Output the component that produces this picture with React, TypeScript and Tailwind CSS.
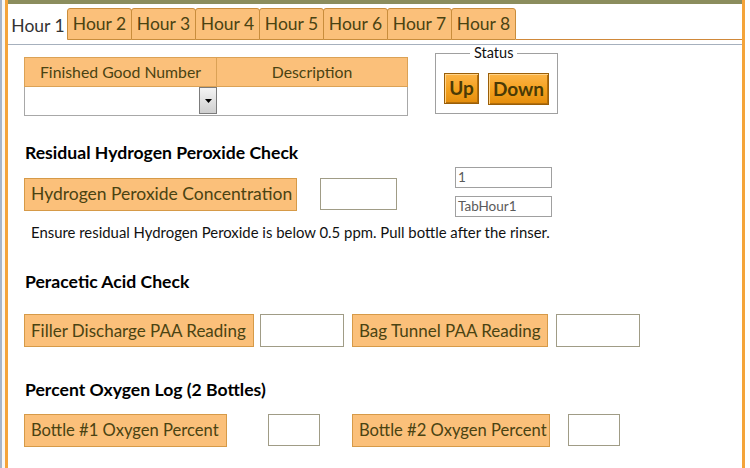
const tabs = ['Hour 1', 'Hour 2', 'Hour 3', 'Hour 4', 'Hour 5', 'Hour 6', 'Hour 7', 'Hour 8']

function Label({ text, w, size }: { text: string; w: string; size: string }) {
  return (
    <div
      className={`${w} ${size} flex h-[33px] shrink-0 items-center overflow-hidden whitespace-nowrap border border-[#d69a48] bg-[#fbc07a] pl-[6px] text-[#4a4312]`}
    >
      {text}
    </div>
  )
}

function Box({ w, h = 'h-[33px]' }: { w: string; h?: string }) {
  return <div className={`${w} ${h} shrink-0 border border-[#a09c86] bg-white`} />
}

export default function App() {
  return (
    <div className="flex h-[468px] w-[750px] overflow-hidden bg-white font-[Lato,sans-serif]">
      {/* left frame */}
      <div className="w-[2px] shrink-0 bg-[#a7b5c9]" />
      <div className="w-[3px] shrink-0 bg-[#f7f7f5]" />
      <div className="w-[3px] shrink-0 bg-[#f4a43a]" />

      <div className="flex w-[734px] shrink-0 flex-col">
        <div className="h-[4px] bg-[#8b8d5d]" />

        {/* tabs */}
        <div className="mt-[4px] flex h-[36px] items-start">
          {tabs.map((t, i) =>
            i === 0 ? (
              <div
                key={t}
                className="flex h-[36px] w-[60px] shrink-0 items-start justify-center bg-white pt-[5px] text-[17.5px] text-[#333]"
              >
                {t}
              </div>
            ) : (
              <div
                key={t}
                className="-ml-px flex h-[32px] w-[65px] shrink-0 items-center justify-center rounded-t-[3px] border border-[#c98d3c] bg-[#fbc07a] text-[17.5px] text-[#4a4312] first:ml-0"
              >
                {t}
              </div>
            )
          )}
          <div className="h-[32px] flex-1 border-b border-[#d0893a]" />
        </div>
        <div className="h-px bg-[#a6b0bd]" />

        {/* content */}
        <div className="flex flex-col pl-[16px]">
          <div className="flex items-start">
            <div className="mt-[12px] w-[384px] shrink-0">
              <div className="flex h-[30px] border border-[#dba256] bg-[#fbc07a] text-[15.8px] text-[#4a4312]">
                <div className="flex w-[192px] items-center justify-center border-r border-[#dba256]">
                  Finished Good Number
                </div>
                <div className="flex flex-1 items-center justify-center">Description</div>
              </div>
              <div className="flex h-[29px] border border-t-0 border-[#a8a8a8] bg-white">
                <div className="flex w-[192px] justify-end">
                  <div className="flex h-[27px] w-[18px] items-center justify-center border border-[#7c7c7c] bg-gradient-to-b from-[#f4f4f4] to-[#cfcfcf]">
                    <svg width="7" height="4" viewBox="0 0 7 4">
                      <path d="M0 0h7L3.5 4z" fill="#000" />
                    </svg>
                  </div>
                </div>
              </div>
            </div>

            <fieldset className="ml-[27px] mt-[1px] h-[68px] w-[121px] shrink-0 border border-[#a0a0a0] px-[8px]">
              <legend className="ml-[26px] px-[4px] text-[14.5px] leading-[14px] text-[#111]">Status</legend>
              <div className="mt-[13px] flex items-start gap-[9px]">
                <button className="flex h-[31px] w-[35px] items-center justify-center border border-[#9a5e08] bg-gradient-to-b from-[#fcb445] via-[#f5a21e] to-[#e48d0b] text-[19px] font-bold text-[#4a3a06] shadow-[inset_1px_1px_0_#ffd48a,inset_-1px_-1px_0_#b56f0a]">
                  Up
                </button>
                <button className="flex h-[32px] w-[61px] items-center justify-center border border-[#9a5e08] bg-gradient-to-b from-[#fcb445] via-[#f5a21e] to-[#e48d0b] text-[19px] font-bold text-[#4a3a06] shadow-[inset_1px_1px_0_#ffd48a,inset_-1px_-1px_0_#b56f0a]">
                  Down
                </button>
              </div>
            </fieldset>
          </div>

          {/* residual hydrogen peroxide */}
          <div className="ml-px mt-[27px] h-[20px] whitespace-nowrap text-[17.6px] font-bold leading-[20px] text-black">
            Residual Hydrogen Peroxide Check
          </div>
          <div className="flex items-start">
            <div className="mt-[15px]">
              <Label text="Hydrogen Peroxide Concentration" w="w-[273px]" size="text-[17.5px]" />
            </div>
            <div className="ml-[23px] mt-[15px]">
              <Box w="w-[77px]" h="h-[32px]" />
            </div>
            <div className="ml-[58px] mt-[4px] flex flex-col gap-[8px]">
              <div className="flex h-[21px] w-[97px] items-center border border-[#a0a0a0] pl-[2px] text-[13.5px] text-[#5a5a5a]">
                1
              </div>
              <div className="flex h-[21px] w-[97px] items-center border border-[#a0a0a0] pl-[2px] text-[13.5px] text-[#5a5a5a]">
                TabHour1
              </div>
            </div>
          </div>
          <div className="ml-[7px] mt-[5px] whitespace-nowrap text-[14.9px] leading-[20px] text-[#111]">
            Ensure residual Hydrogen Peroxide is below 0.5 ppm. Pull bottle after the rinser.
          </div>

          {/* peracetic acid */}
          <div className="ml-px mt-[30px] h-[20px] whitespace-nowrap text-[17.6px] font-bold leading-[20px] text-black">
            Peracetic Acid Check
          </div>
          <div className="mt-[22px] flex items-start">
            <Label text="Filler Discharge PAA Reading" w="w-[230px]" size="text-[17px]" />
            <div className="ml-[6px]">
              <Box w="w-[84px]" />
            </div>
            <div className="ml-[8px]">
              <Label text="Bag Tunnel PAA Reading" w="w-[196px]" size="text-[17px]" />
            </div>
            <div className="ml-[8px]">
              <Box w="w-[84px]" />
            </div>
          </div>

          {/* oxygen */}
          <div className="ml-px mt-[33px] h-[20px] whitespace-nowrap text-[17.6px] font-bold leading-[20px] text-black">
            Percent Oxygen Log (2 Bottles)
          </div>
          <div className="mt-[14px] flex items-start">
            <Label text="Bottle #1 Oxygen Percent" w="w-[203px]" size="text-[16.6px]" />
            <div className="ml-[41px]">
              <Box w="w-[52px]" h="h-[32px]" />
            </div>
            <div className="ml-[32px]">
              <Label text="Bottle #2 Oxygen Percent" w="w-[198px]" size="text-[16.6px]" />
            </div>
            <div className="ml-[18px]">
              <Box w="w-[52px]" h="h-[32px]" />
            </div>
          </div>
        </div>
      </div>

      {/* right frame */}
      <div className="w-[3px] shrink-0 bg-[#f4a43a]" />
      <div className="flex-1 bg-white" />
    </div>
  )
}
